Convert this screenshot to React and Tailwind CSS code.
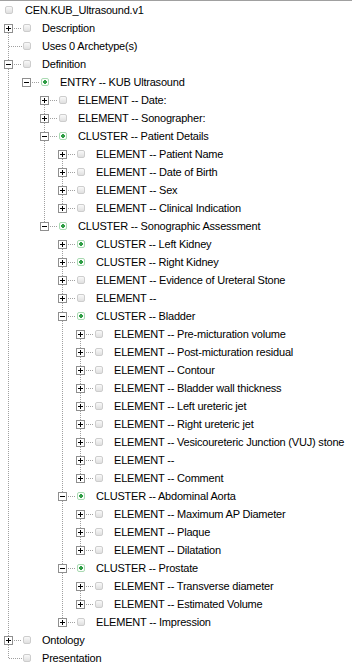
const el = (label, collapsed = true) => ({ label, collapsed });
const cl = (label, children, collapsed = false) => ({ label, kind: 'cluster', children, collapsed });

const tree = {
  label: 'CEN.KUB_Ultrasound.v1',
  children: [
    el('Description'),
    { label: 'Uses 0 Archetype(s)' },
    {
      label: 'Definition',
      children: [
        cl('ENTRY -- KUB Ultrasound', [
          el('ELEMENT -- Date:'),
          el('ELEMENT -- Sonographer:'),
          cl('CLUSTER -- Patient Details', [
            el('ELEMENT -- Patient Name'),
            el('ELEMENT -- Date of Birth'),
            el('ELEMENT -- Sex'),
            el('ELEMENT -- Clinical Indication'),
          ]),
          cl('CLUSTER -- Sonographic Assessment', [
            cl('CLUSTER -- Left Kidney', null, true),
            cl('CLUSTER -- Right Kidney', null, true),
            el('ELEMENT -- Evidence of Ureteral Stone'),
            el('ELEMENT --'),
            cl('CLUSTER -- Bladder', [
              el('ELEMENT -- Pre-micturation volume'),
              el('ELEMENT -- Post-micturation residual'),
              el('ELEMENT -- Contour'),
              el('ELEMENT -- Bladder wall thickness'),
              el('ELEMENT -- Left ureteric jet'),
              el('ELEMENT -- Right ureteric jet'),
              el('ELEMENT -- Vesicoureteric Junction (VUJ) stone'),
              el('ELEMENT --'),
              el('ELEMENT -- Comment'),
            ]),
            cl('CLUSTER -- Abdominal Aorta', [
              el('ELEMENT -- Maximum AP Diameter'),
              el('ELEMENT -- Plaque'),
              el('ELEMENT -- Dilatation'),
            ]),
            cl('CLUSTER -- Prostate', [
              el('ELEMENT -- Transverse diameter'),
              el('ELEMENT -- Estimated Volume'),
            ]),
            el('ELEMENT -- Impression'),
          ]),
        ]),
      ],
    },
    el('Ontology'),
    { label: 'Presentation' },
  ],
};

// flatten the tree into rows, keeping what the connector lines need
const flatten = (node, level, guides, first, last, out) => {
  out.push({ ...node, level, guides, first, last });
  const kids = node.children || [];
  kids.forEach((k, i) =>
    flatten(k, level + 1, level >= 1 ? [...guides, !last] : guides, i === 0, i === kids.length - 1, out)
  );
  return out;
};

const rows = flatten(tree, 0, [], true, true, []);

const Connector = ({ row }) => {
  const own = 18 * (row.level - 1);
  const hasBox = row.collapsed || (row.children && row.children.length > 0);
  const expanded = row.children && row.children.length > 0;
  return (
    <svg width={own + 23} height="18" className="shrink-0" shapeRendering="crispEdges">
      <g stroke="#a0a0a0" strokeDasharray="1 1">
        {row.guides.map((on, k) =>
          on ? <line key={k} x1={18 * k + 8.5} y1="0" x2={18 * k + 8.5} y2="18" /> : null
        )}
        {!row.first && <line x1={own + 8.5} y1="0" x2={own + 8.5} y2="9" />}
        {!row.last && <line x1={own + 8.5} y1="10" x2={own + 8.5} y2="18" />}
        <line x1={hasBox ? own + 14 : own + 9} y1="9.5" x2={own + 22} y2="9.5" />
      </g>
      {hasBox && (
        <g>
          <rect x={own + 4.5} y="5.5" width="8" height="8" fill="#fff" stroke="#8f8f8f" />
          <rect x={own + 6} y="9" width="5" height="1" fill="#000" />
          {!expanded && <rect x={own + 8} y="7" width="1" height="5" fill="#000" />}
        </g>
      )}
    </svg>
  );
};

const NodeIcon = ({ kind }) =>
  kind === 'cluster' ? (
    <svg width="8" height="8" className="shrink-0">
      <rect x="0.5" y="0.5" width="7" height="7" rx="1.5" fill="#fbfdfb" stroke="#a9d9b2" />
      <rect x="3" y="2" width="2" height="4" fill="#2f9e45" />
      <rect x="2" y="3" width="4" height="2" fill="#2f9e45" />
    </svg>
  ) : (
    <svg width="8" height="8" className="shrink-0">
      <defs>
        <linearGradient id="elg" x1="0" y1="0" x2="0" y2="1">
          <stop offset="0" stopColor="#fbfbfb" />
          <stop offset="1" stopColor="#dedede" />
        </linearGradient>
      </defs>
      <rect x="0.5" y="0.5" width="7" height="7" rx="1.5" fill="url(#elg)" stroke="#cdcdcd" />
    </svg>
  );

export default function App() {
  return (
    <div className="w-[352px] h-[669px] overflow-hidden bg-white border-t border-[#a0a0a0] font-['Liberation_Sans',Arial,sans-serif] text-[11px] tracking-[-0.2px] text-black">
      {rows.map((row, i) => (
        <div key={i} className="flex items-center h-[18px] leading-[18px] whitespace-nowrap">
          {row.level === 0 ? <div className="w-[5px] shrink-0" /> : <Connector row={row} />}
          <NodeIcon kind={row.kind} />
          <span className={row.level === 0 ? 'ml-[12px]' : 'ml-[11px]'}>{row.label}</span>
        </div>
      ))}
    </div>
  );
}
